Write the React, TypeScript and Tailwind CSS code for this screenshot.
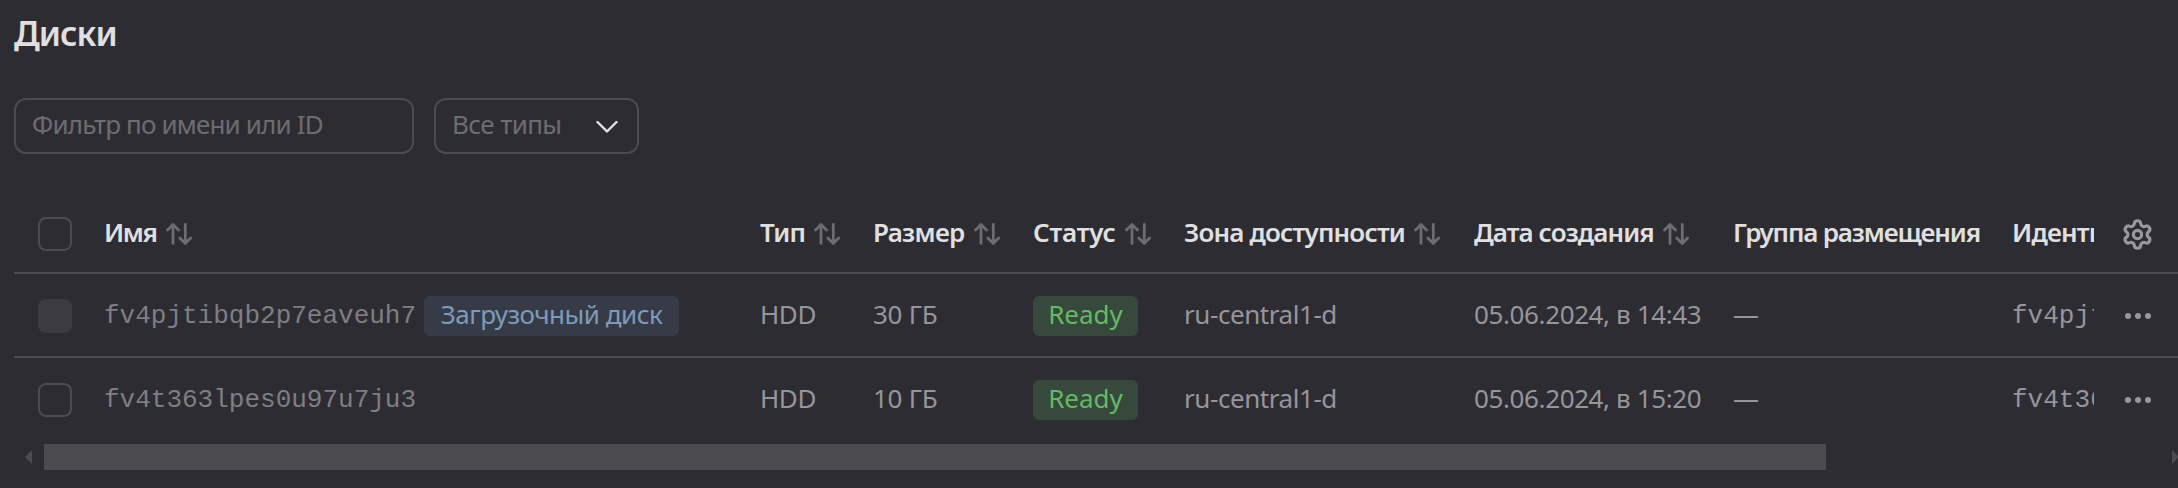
import React from 'react';
import { Settings } from 'lucide-react';

function SortIcon() {
  return (
    <svg className="h-[22px] w-[26px] shrink-0" viewBox="0 0 26 22" fill="none" stroke="#6d6c70" strokeWidth="2.8" strokeLinecap="round" strokeLinejoin="round">
      <path d="M7 20.5V1.7M1.5 7 7 1.5 12.5 7" />
      <path d="M19.3 1.5v18.8M13.8 15l5.5 5.5 5.3-5.5" />
    </svg>
  );
}

const COLS = 'grid grid-cols-[90px_656px_113px_160px_151px_290px_259px_279px_82px_1fr] items-center';

function Head({ children, fit, sort = true }: { children: React.ReactNode; fit: string; sort?: boolean }) {
  return (
    <div className="flex min-w-0 items-center overflow-hidden whitespace-nowrap">
      <span className={`shrink-0 pb-1 ${fit}`}>{children}</span>
      {sort && <SortIcon />}
    </div>
  );
}

function Row({ id, boot, size, time, last }: { id: string; boot?: boolean; size: string; time: string; last?: boolean }) {
  return (
    <div className={`${COLS} h-[84px] border-b-2 pt-0.5 whitespace-nowrap text-[#969599] ${last ? 'border-transparent' : 'border-[#4c4b50]'}`}>
      <div className="pl-6">
        <div className={`size-[34px] rounded-lg ${boot ? 'bg-[#3c3b41]' : 'border-2 border-[#4c4b50]'}`} />
      </div>
      <div className="flex items-center gap-2">
        <span className="font-['Liberation_Mono',monospace] text-[#7f7e82]">{id}</span>
        {boot && (
          <span className="flex h-10 w-[255px] items-center justify-center rounded-md bg-[#373b48] pb-1 tracking-[-0.5px] text-[#7d9bb8]">
            Загрузочный диск
          </span>
        )}
      </div>
      <div className="pb-1 tracking-[-0.4px]">HDD</div>
      <div className="pb-1 tracking-[-0.25px]">{size}</div>
      <div>
        <span className="flex h-10 w-[105px] items-center justify-center rounded-md bg-[#37483c] pb-1 text-[#62bb62]">Ready</span>
      </div>
      <div className="pb-1 tracking-[-0.43px]">ru-central1-d</div>
      <div className="pb-1 tracking-[-0.38px]">{time}</div>
      <div className="pb-1">—</div>
      <div className="overflow-hidden font-['Liberation_Mono',monospace]">{id}</div>
      <div className="flex gap-1 pl-[31px]">
        <i className="size-1.5 rounded-full bg-[#98979b]" />
        <i className="size-1.5 rounded-full bg-[#98979b]" />
        <i className="size-1.5 rounded-full bg-[#98979b]" />
      </div>
    </div>
  );
}

export default function App() {
  return (
    <div className="flex h-[488px] w-[2178px] flex-col overflow-hidden bg-[#2d2c33] pl-3.5 font-['Noto_Sans',sans-serif] text-[26px] leading-9">
      <h1 className="mt-[13px] text-[34px] leading-10 font-semibold tracking-[-0.95px] text-[#e0e0e0]">Диски</h1>
      <div className="mt-[45px] flex gap-5">
        <div className="flex h-14 w-[400px] items-center rounded-xl border-2 border-[#4c4b50] pb-1 pl-4 tracking-[-0.84px] text-[#6d6c70]">
          Фильтр по имени или ID
        </div>
        <div className="flex h-14 w-[205px] items-center justify-between rounded-xl border-2 border-[#4c4b50] pr-[19px] pl-4 text-[#6d6c70]">
          <span className="pb-1 tracking-[-0.6px]">Все типы</span>
          <svg className="mt-0.5 h-3 w-[22px]" viewBox="0 0 22 12" fill="none" stroke="#e3e3e4" strokeWidth="2.4" strokeLinecap="round" strokeLinejoin="round">
            <path d="M1.5 1 11 10.5 20.5 1" />
          </svg>
        </div>
      </div>
      <div className={`${COLS} mt-[40px] h-20 border-b-2 border-[#4c4b50] pt-0.5 font-semibold text-[#e0e0e0]`}>
        <div className="pl-6">
          <div className="size-[34px] rounded-lg border-2 border-[#4c4b50]" />
        </div>
        <Head fit="w-[62px] tracking-[-1.4px]">Имя</Head>
        <Head fit="w-[54px] tracking-[-0.8px]">Тип</Head>
        <Head fit="w-[101px] tracking-[-0.7px]">Размер</Head>
        <Head fit="w-[92px] tracking-[-0.2px]">Статус</Head>
        <Head fit="w-[230px] tracking-[-0.82px]">Зона доступности</Head>
        <Head fit="w-[189px] tracking-[-0.92px]">Дата создания</Head>
        <Head fit="tracking-[-1.15px]" sort={false}>Группа размещения</Head>
        <Head fit="tracking-[-0.8px]" sort={false}>Идентификатор</Head>
        <div className="pl-[27px]">
          <Settings className="size-[33px]" color="#98979b" strokeWidth={2.3} />
        </div>
      </div>
      <Row id="fv4pjtibqb2p7eaveuh7" boot size="30 ГБ" time="05.06.2024, в 14:43" />
      <Row id="fv4t363lpes0u97u7ju3" size="10 ГБ" time="05.06.2024, в 15:20" last />
      <div className="mt-0.5 flex h-[26px] items-center">
        <svg className="ml-[11px] h-3.5 w-[7px]" viewBox="0 0 7 14" fill="#4c4b50"><path d="M7 0v14L0 7z" /></svg>
        <div className="ml-3 h-[26px] w-[1782px] bg-[#4c4b50]" />
        <svg className="ml-auto h-3.5 w-[6px]" viewBox="0 0 6 14" fill="#4c4b50"><path d="M0 0v14L7 7z" /></svg>
      </div>
    </div>
  );
}
